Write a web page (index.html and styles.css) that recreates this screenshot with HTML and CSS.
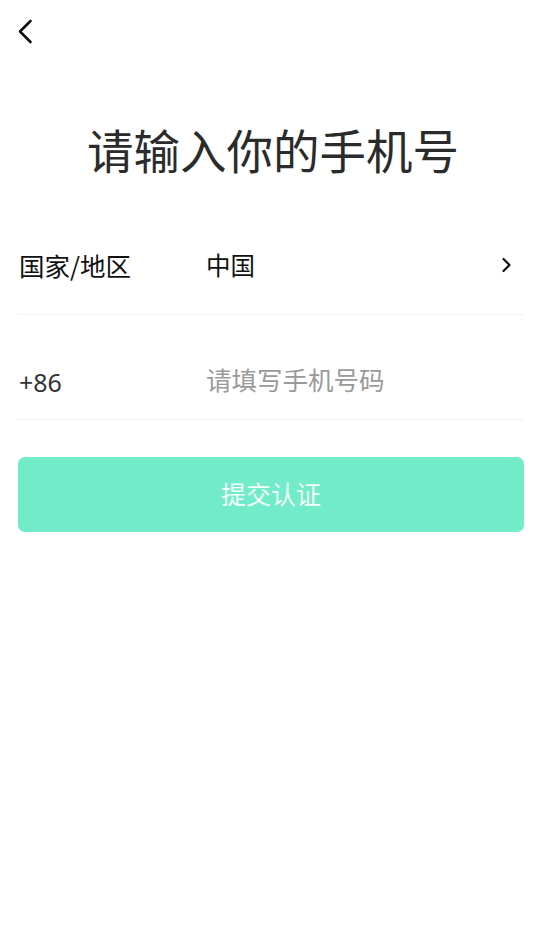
FILE: index.html
```html
<!DOCTYPE html>
<html lang="zh-CN">
<head>
<meta charset="utf-8">
<meta name="viewport" content="width=device-width, initial-scale=1">
<title>请输入你的手机号</title>
<link rel="stylesheet" href="styles.css">
</head>
<body>
<div class="page">
  <header class="topbar">
    <button class="back" aria-label="返回">
      <svg width="16" height="25" viewBox="0 0 16 25"><path d="M13.5 2 L3 12.5 L13.5 23" fill="none" stroke="#111" stroke-width="2.6" stroke-linecap="round" stroke-linejoin="round"/></svg>
    </button>
  </header>
  <h1 class="title">请输入你的手机号</h1>
  <div class="form">
    <div class="row row-region">
      <span class="label">国家/地区</span>
      <span class="value">中国</span>
      <svg class="chev" width="11" height="16" viewBox="0 0 11 16"><path d="M2.5 2 L8.5 8 L2.5 14" fill="none" stroke="#111" stroke-width="2.2" stroke-linecap="round" stroke-linejoin="round"/></svg>
    </div>
    <div class="divider"></div>
    <div class="row row-phone">
      <span class="label code">+86</span>
      <input class="phone" type="tel" placeholder="请填写手机号码">
    </div>
    <div class="divider"></div>
    <button class="submit">提交认证</button>
  </div>
</div>
</body>
</html>
```

FILE: styles.css
```css
* { box-sizing: border-box; }
html, body { margin: 0; padding: 0; background: #fff; }
body {
  font-family: "Noto Sans", "Noto Sans CJK SC", sans-serif;
  color: #111;
}
.page { width: 544px; min-height: 941px; }
.topbar {
  height: 64px;
  padding: 19px 0 0 17px;
}
.back {
  border: 0;
  background: none;
  padding: 0;
  margin: 0;
  display: block;
  width: 16px;
  height: 25px;
}
.back svg { display: block; }
.title {
  margin: 55px 0 0 2px;
  height: 60px;
  line-height: 60px;
  font-family: "Noto Sans CJK SC", sans-serif;
  font-size: 46.5px;
  font-weight: 400;
  text-align: center;
  color: #2b2b2b;
}
.form { padding: 0 20px 0 18px; }
.row {
  display: flex;
  align-items: center;
  height: 34px;
  box-sizing: content-box;
}
.row-region { padding: 69px 0 32px; }
.row-phone { padding: 50px 0 20px; }
.label {
  width: 188px;
  flex: none;
  font-family: "Noto Sans CJK SC", sans-serif;
  font-size: 25.5px;
  line-height: 34px;
  padding-left: 1px;
  color: #111;
}
.code {
  font-family: "Noto Sans", "Noto Sans CJK SC", sans-serif;
  color: #333;
  font-size: 25px;
}
.value {
  flex: 1;
  font-family: "Noto Sans CJK SC", sans-serif;
  font-size: 24.5px;
  line-height: 34px;
  color: #111;
}
.chev { flex: none; margin-right: 12px; display: block; }
.phone {
  flex: 1;
  border: 0;
  outline: none;
  padding: 0;
  margin: 0;
  background: transparent;
  font-family: "Noto Sans CJK SC", sans-serif;
  font-size: 25.5px;
  line-height: 34px;
  height: 34px;
  color: #111;
  position: relative;
  top: -3px;
}
.phone::placeholder { color: #9a9a9a; }
.divider {
  height: 1px;
  background: #f2f2f2;
}
.submit {
  display: block;
  width: 100%;
  height: 75px;
  margin-top: 37px;
  border: 0;
  border-radius: 7px;
  background: #72ebc9;
  color: #f2fffa;
  font-family: "Noto Sans CJK SC", sans-serif;
  font-size: 25px;
  line-height: 34px;
  padding: 0 0 4px;
}
```
